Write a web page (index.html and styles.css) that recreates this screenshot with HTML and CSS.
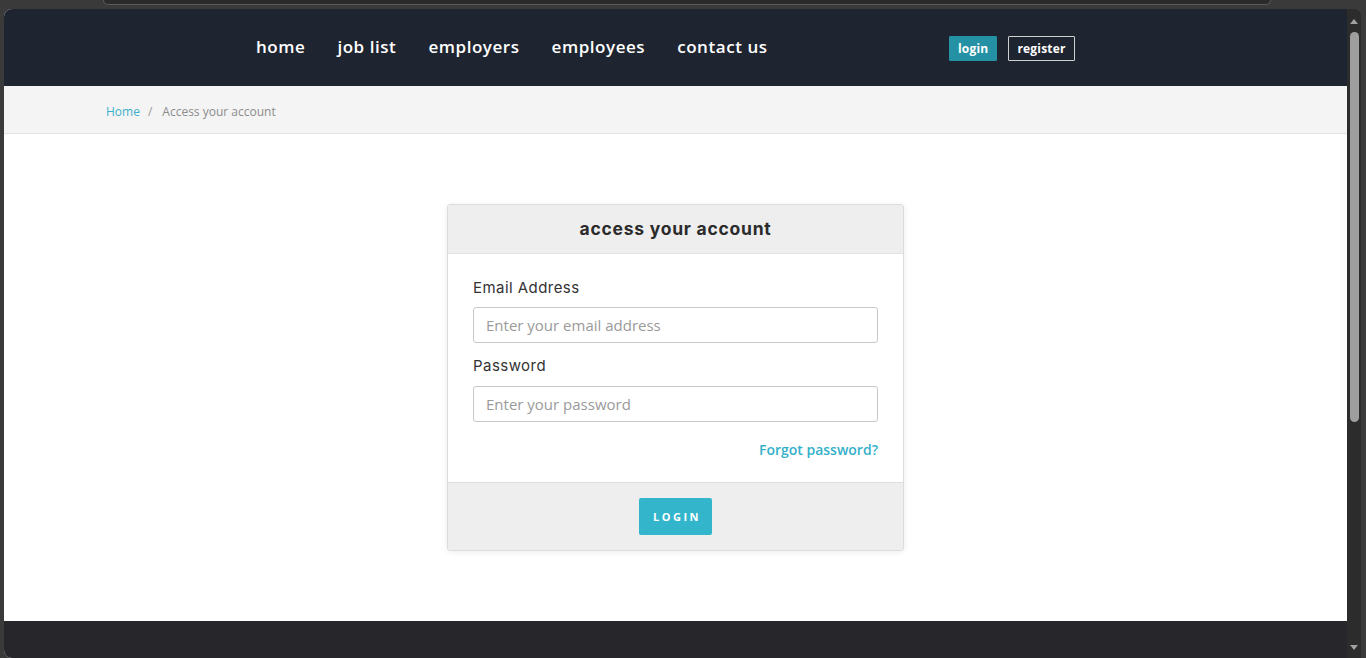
FILE: index.html
```html
<!DOCTYPE html>
<html lang="en">
<head>
<meta charset="utf-8">
<title>Access your account</title>
<link rel="stylesheet" href="styles.css">
</head>
<body>
<div class="chrome-top"><div class="tab"></div></div>
<div class="window">
  <div class="page">
    <header class="navbar">
      <nav class="nav-links">
        <a href="#">home</a>
        <a href="#">job list</a>
        <a href="#">employers</a>
        <a href="#">employees</a>
        <a href="#">contact us</a>
      </nav>
      <div class="nav-actions">
        <a href="#" class="btn-login">login</a>
        <a href="#" class="btn-register">register</a>
      </div>
    </header>
    <div class="breadcrumb">
      <a href="#" class="crumb-home">Home</a>
      <span class="crumb-sep">/</span>
      <span class="crumb-current">Access your account</span>
    </div>
    <main class="content">
      <div class="card">
        <div class="card-header">access your account</div>
        <div class="card-body">
          <label class="field-label" for="email">Email Address</label>
          <input class="field-input" id="email" type="text" placeholder="Enter your email address">
          <label class="field-label pw" for="pw">Password</label>
          <input class="field-input" id="pw" type="password" placeholder="Enter your password">
          <div class="forgot-row"><a href="#" class="forgot">Forgot password?</a></div>
        </div>
        <div class="card-footer">
          <button class="btn-submit">LOGIN</button>
        </div>
      </div>
    </main>
    <footer class="site-footer"></footer>
  </div>
  <div class="scrollbar">
    <div class="arrow up"></div>
    <div class="thumb"></div>
    <div class="track"></div>
    <div class="arrow down"></div>
  </div>
</div>
</body>
</html>
```

FILE: styles.css
```css
* { box-sizing: border-box; }
html, body { margin: 0; padding: 0; }
body {
  background: #3a3a3a;
  width: 1366px;
  height: 658px;
  overflow: hidden;
  font-family: "Open Sans", "Liberation Sans", sans-serif;
}
.chrome-top {
  height: 9px;
  position: relative;
}
.tab {
  margin-left: 103px;
  width: 1168px;
  height: 5px;
  background: #2b2b2b;
  border: 1px solid #5a5a5a;
  border-top: none;
  border-radius: 0 0 12px 12px;
}
.window {
  margin-left: 4px;
  width: 1357px;
  height: 649px;
  display: flex;
  background: #2c2c2c;
  border-radius: 8px 8px 0 8px;
  overflow: hidden;
}
.page {
  width: 1343px;
  display: flex;
  flex-direction: column;
  background: #fff;
}
.navbar {
  height: 77px;
  background: #1f2530;
  display: flex;
  align-items: center;
  padding-left: 252px;
}
.nav-links {
  display: flex;
  gap: 32px;
  width: 693px;
}
.nav-links a {
  color: #fff;
  text-decoration: none;
  font-weight: 600;
  font-size: 17px;
  letter-spacing: 0.55px;
  line-height: 24px;
  margin-top: -1px;
}
.nav-actions {
  display: flex;
  gap: 11px;
  margin-top: 1px;
}
.nav-actions a {
  display: block;
  height: 25px;
  line-height: 23px;
  font-size: 12px;
  font-weight: 700;
  color: #fff;
  text-decoration: none;
  border-radius: 1px;
  letter-spacing: 0.2px;
}
.btn-login {
  background: #2591a5;
  border: 1px solid #2591a5;
  padding: 0 8px 0 8px;
}
.btn-register {
  border: 1px solid #d0d0d0;
  padding: 0 8px 0 8px;
}
.breadcrumb {
  height: 48px;
  background: #f4f4f4;
  border-bottom: 1px solid #e3e3e3;
  display: flex;
  align-items: center;
  padding-left: 102px;
  font-size: 12px;
  padding-top: 3px;
}
.crumb-home { color: #3bb0cc; text-decoration: none; }
.crumb-sep { color: #999; margin: 0 10px 0 8px; }
.crumb-current { color: #8c8c8c; }
.content {
  flex: 1;
  display: flex;
  justify-content: center;
  align-items: flex-start;
  padding-top: 70px;
}
.card {
  width: 457px;
  background: #fff;
  border: 1px solid #dcdcdc;
  border-radius: 3px;
  box-shadow: 0 1px 6px rgba(0,0,0,0.08);
  overflow: hidden;
}
.card-header {
  height: 49px;
  background: #eeeeee;
  border-bottom: 1px solid #e2e2e2;
  text-align: center;
  line-height: 48px;
  font-family: "Inter", "DejaVu Sans", sans-serif;
  font-weight: 700;
  font-size: 17.5px;
  letter-spacing: 0.75px;
  color: #2b2b2b;
}
.card-body {
  padding: 23px 24px 22px 25px;
  display: flex;
  flex-direction: column;
}
.field-label {
  font-family: "Inter", "DejaVu Sans", sans-serif;
  font-size: 15px;
  letter-spacing: 0.45px;
  line-height: 22px;
  color: #333;
  margin-bottom: 8px;
}
.field-label.pw { margin-top: 12px; margin-bottom: 9px; }
.field-input {
  height: 36px;
  width: 405px;
  border: 1px solid #c8c8c8;
  border-radius: 3px;
  padding: 0 12px;
  font-family: "Open Sans", sans-serif;
  font-size: 15px;
  color: #555;
  outline: none;
}
.field-input::placeholder { color: #9a9a9a; }
.forgot-row {
  display: flex;
  justify-content: flex-end;
  padding-top: 18px;
  width: 405px;
}
.forgot {
  color: #35b0cb;
  font-weight: 600;
  font-size: 14px;
  line-height: 20px;
  text-decoration: none;
}
.card-footer {
  height: 68px;
  background: #eeeeee;
  border-top: 1px solid #dedede;
  display: flex;
  justify-content: center;
  padding-top: 15px;
}
.btn-submit {
  width: 73px;
  height: 37px;
  border: none;
  border-radius: 2px;
  background: #33b5cc;
  color: #fff;
  font-family: "Open Sans", sans-serif;
  font-weight: 700;
  font-size: 11px;
  letter-spacing: 2.5px;
  padding: 0 0 0 3px;
}
.site-footer {
  height: 37px;
  background: #26262b;
}
.scrollbar {
  width: 14px;
  background: #2c2c2c;
  display: flex;
  flex-direction: column;
  align-items: center;
  padding-top: 10px;
}
.arrow {
  width: 0;
  height: 0;
  border-left: 4px solid transparent;
  border-right: 4px solid transparent;
}
.arrow.up { border-bottom: 5px solid #a0a0a0; }
.arrow.down { border-top: 5px solid #a0a0a0; margin-bottom: 8px; }
.thumb {
  margin-top: 8px;
  width: 9px;
  height: 390px;
  background: #9e9e9e;
  border-radius: 5px;
}
.track { flex: 1; }
```
